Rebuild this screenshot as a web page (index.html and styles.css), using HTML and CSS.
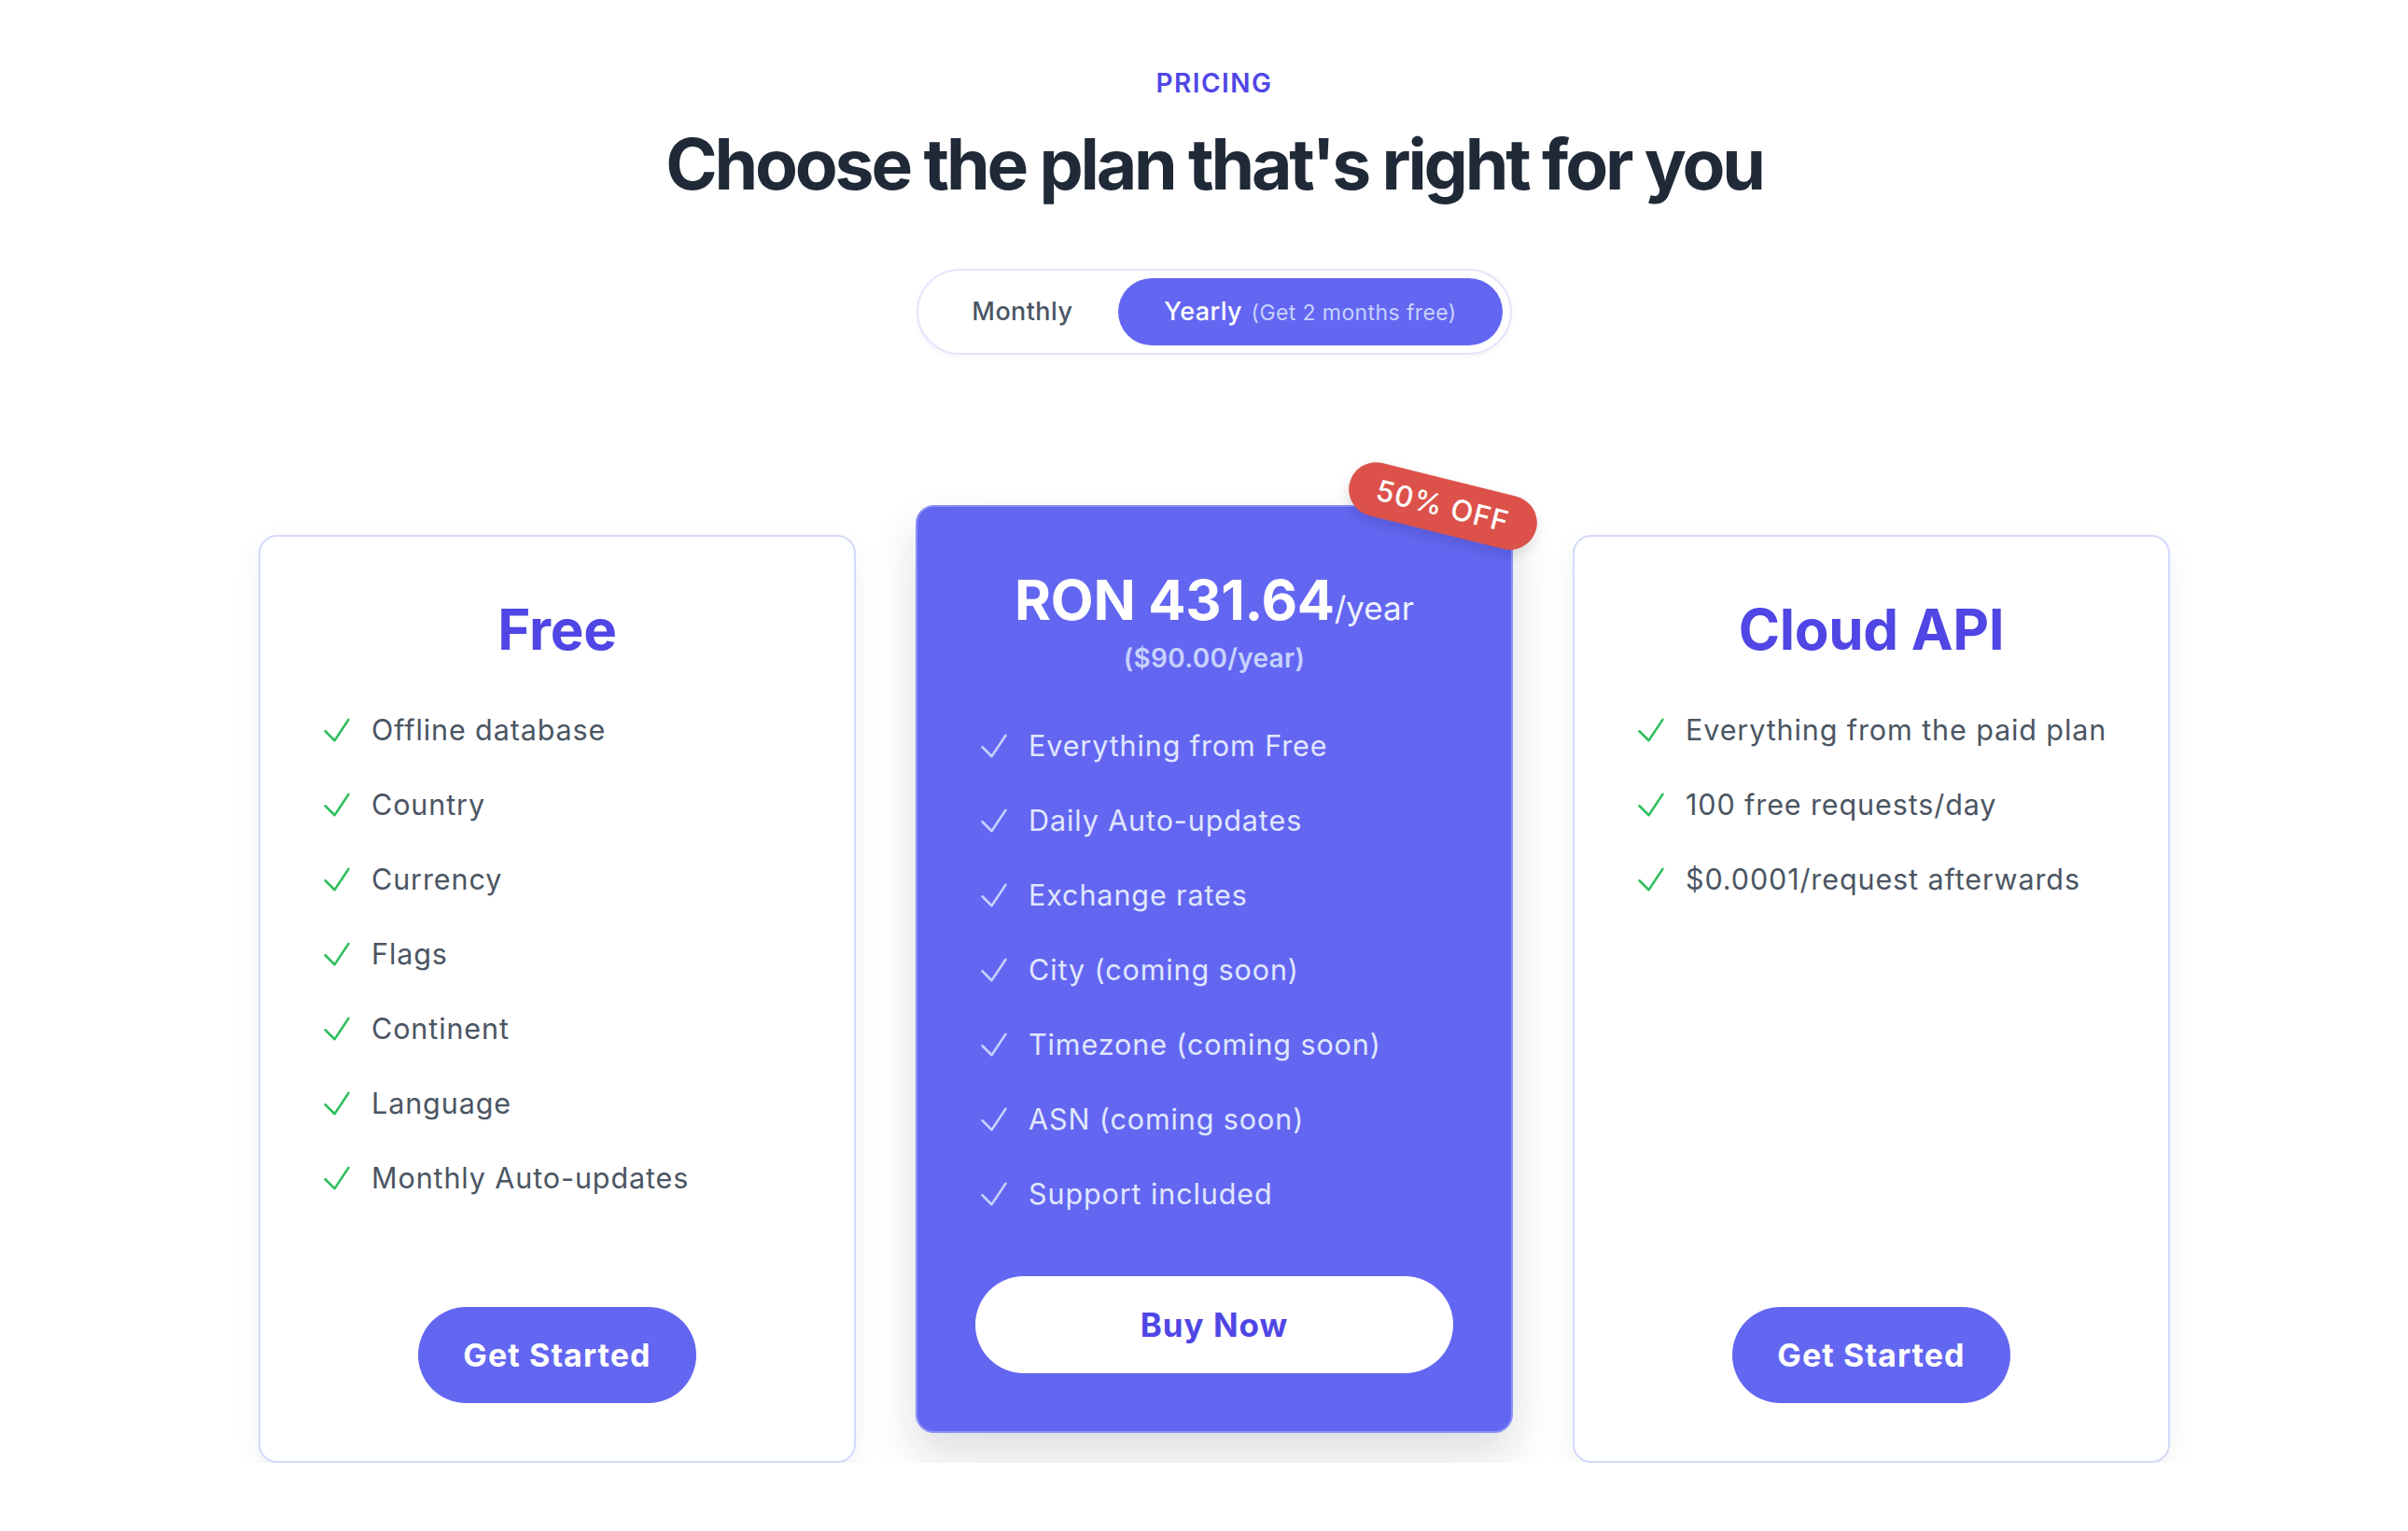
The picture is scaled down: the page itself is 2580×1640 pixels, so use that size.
FILE: index.html
```html
<!DOCTYPE html>
<html lang="en">
<head>
<meta charset="utf-8">
<title>Pricing</title>
<link rel="stylesheet" href="styles.css">
</head>
<body>
<main class="page">
  <header class="intro">
    <p class="eyebrow">Pricing</p>
    <h1 class="title">Choose the plan that's right for you</h1>
    <div class="toggle">
      <button class="toggle-btn" type="button">Monthly</button>
      <button class="toggle-btn is-active" type="button">Yearly <span class="toggle-note">(Get 2 months free)</span></button>
    </div>
  </header>

  <section class="plans">
    <article class="plan">
      <h2 class="plan-name">Free</h2>
      <ul class="features">
        <li class="feature"><svg class="check" viewBox="0 0 24 24" fill="none" stroke="currentColor" stroke-width="1.5" stroke-linecap="round" stroke-linejoin="round"><path d="M4.5 12.75l6 6 9-13.5"/></svg><span>Offline database</span></li>
        <li class="feature"><svg class="check" viewBox="0 0 24 24" fill="none" stroke="currentColor" stroke-width="1.5" stroke-linecap="round" stroke-linejoin="round"><path d="M4.5 12.75l6 6 9-13.5"/></svg><span>Country</span></li>
        <li class="feature"><svg class="check" viewBox="0 0 24 24" fill="none" stroke="currentColor" stroke-width="1.5" stroke-linecap="round" stroke-linejoin="round"><path d="M4.5 12.75l6 6 9-13.5"/></svg><span>Currency</span></li>
        <li class="feature"><svg class="check" viewBox="0 0 24 24" fill="none" stroke="currentColor" stroke-width="1.5" stroke-linecap="round" stroke-linejoin="round"><path d="M4.5 12.75l6 6 9-13.5"/></svg><span>Flags</span></li>
        <li class="feature"><svg class="check" viewBox="0 0 24 24" fill="none" stroke="currentColor" stroke-width="1.5" stroke-linecap="round" stroke-linejoin="round"><path d="M4.5 12.75l6 6 9-13.5"/></svg><span>Continent</span></li>
        <li class="feature"><svg class="check" viewBox="0 0 24 24" fill="none" stroke="currentColor" stroke-width="1.5" stroke-linecap="round" stroke-linejoin="round"><path d="M4.5 12.75l6 6 9-13.5"/></svg><span>Language</span></li>
        <li class="feature"><svg class="check" viewBox="0 0 24 24" fill="none" stroke="currentColor" stroke-width="1.5" stroke-linecap="round" stroke-linejoin="round"><path d="M4.5 12.75l6 6 9-13.5"/></svg><span>Monthly Auto-updates</span></li>
      </ul>
      <div class="plan-footer"><a class="btn btn-primary" href="#">Get Started</a></div>
    </article>

    <article class="plan plan-featured">
      <span class="badge">50% OFF</span>
      <p class="price"><span class="price-amount">RON 431.64</span><span class="price-period">/year</span></p>
      <p class="price-usd">($90.00/year)</p>
      <ul class="features features-light">
        <li class="feature"><svg class="check" viewBox="0 0 24 24" fill="none" stroke="currentColor" stroke-width="1.5" stroke-linecap="round" stroke-linejoin="round"><path d="M4.5 12.75l6 6 9-13.5"/></svg><span>Everything from Free</span></li>
        <li class="feature"><svg class="check" viewBox="0 0 24 24" fill="none" stroke="currentColor" stroke-width="1.5" stroke-linecap="round" stroke-linejoin="round"><path d="M4.5 12.75l6 6 9-13.5"/></svg><span>Daily Auto-updates</span></li>
        <li class="feature"><svg class="check" viewBox="0 0 24 24" fill="none" stroke="currentColor" stroke-width="1.5" stroke-linecap="round" stroke-linejoin="round"><path d="M4.5 12.75l6 6 9-13.5"/></svg><span>Exchange rates</span></li>
        <li class="feature"><svg class="check" viewBox="0 0 24 24" fill="none" stroke="currentColor" stroke-width="1.5" stroke-linecap="round" stroke-linejoin="round"><path d="M4.5 12.75l6 6 9-13.5"/></svg><span>City (coming soon)</span></li>
        <li class="feature"><svg class="check" viewBox="0 0 24 24" fill="none" stroke="currentColor" stroke-width="1.5" stroke-linecap="round" stroke-linejoin="round"><path d="M4.5 12.75l6 6 9-13.5"/></svg><span>Timezone (coming soon)</span></li>
        <li class="feature"><svg class="check" viewBox="0 0 24 24" fill="none" stroke="currentColor" stroke-width="1.5" stroke-linecap="round" stroke-linejoin="round"><path d="M4.5 12.75l6 6 9-13.5"/></svg><span>ASN (coming soon)</span></li>
        <li class="feature"><svg class="check" viewBox="0 0 24 24" fill="none" stroke="currentColor" stroke-width="1.5" stroke-linecap="round" stroke-linejoin="round"><path d="M4.5 12.75l6 6 9-13.5"/></svg><span>Support included</span></li>
      </ul>
      <div class="plan-footer"><a class="btn btn-white" href="#">Buy Now</a></div>
    </article>

    <article class="plan">
      <h2 class="plan-name">Cloud API</h2>
      <ul class="features">
        <li class="feature"><svg class="check" viewBox="0 0 24 24" fill="none" stroke="currentColor" stroke-width="1.5" stroke-linecap="round" stroke-linejoin="round"><path d="M4.5 12.75l6 6 9-13.5"/></svg><span>Everything from the paid plan</span></li>
        <li class="feature"><svg class="check" viewBox="0 0 24 24" fill="none" stroke="currentColor" stroke-width="1.5" stroke-linecap="round" stroke-linejoin="round"><path d="M4.5 12.75l6 6 9-13.5"/></svg><span>100 free requests/day</span></li>
        <li class="feature"><svg class="check" viewBox="0 0 24 24" fill="none" stroke="currentColor" stroke-width="1.5" stroke-linecap="round" stroke-linejoin="round"><path d="M4.5 12.75l6 6 9-13.5"/></svg><span>$0.0001/request afterwards</span></li>
      </ul>
      <div class="plan-footer"><a class="btn btn-primary" href="#">Get Started</a></div>
    </article>
  </section>
</main>
</body>
</html>
```

FILE: styles.css
```css
* { box-sizing: border-box; }

html, body {
  margin: 0;
  background: #ffffff;
}

body {
  padding-left: 22px;
  font-family: Inter, "Noto Sans", "Liberation Sans", sans-serif;
  color: #1f2937;
}

.page {
  display: flex;
  flex-direction: column;
  align-items: center;
  padding-top: 68px;
}

.intro {
  display: flex;
  flex-direction: column;
  align-items: center;
}

.eyebrow {
  margin: 0;
  font-size: 28px;
  line-height: 42px;
  font-weight: 600;
  letter-spacing: 1.5px;
  text-transform: uppercase;
  color: #4f46e5;
}

.title {
  margin: 28px 0 0;
  font-size: 75px;
  line-height: 76px;
  font-weight: 700;
  letter-spacing: -3.2px;
  color: #1f2937;
}

.toggle {
  margin-top: 74px;
  display: flex;
  padding: 8px;
  border: 2px solid #e3e7fb;
  border-radius: 999px;
  background: #ffffff;
  box-shadow: 0 2px 6px rgba(17, 24, 39, 0.04);
}

.toggle-btn {
  font-family: inherit;
  border: 0;
  background: transparent;
  height: 72px;
  line-height: 72px;
  padding: 0 49px;
  border-radius: 999px;
  font-size: 27px;
  font-weight: 500;
  letter-spacing: 0.4px;
  color: #4b5563;
  white-space: nowrap;
  cursor: pointer;
}

.toggle-btn.is-active {
  background: #6366f1;
  color: #ffffff;
}

.toggle-note {
  margin-left: 2px;
  font-size: 23px;
  font-weight: 400;
  letter-spacing: 0.4px;
  color: #c7d2fe;
}

.plans {
  margin-top: 193px;
  display: grid;
  grid-template-columns: repeat(3, 640px);
  column-gap: 64px;
  align-items: stretch;
}

.plan {
  position: relative;
  display: flex;
  flex-direction: column;
  padding: 66px 62px 62px;
  border: 2px solid #d3daf9;
  border-radius: 20px;
  background: #ffffff;
  box-shadow: 0 10px 30px rgba(17, 24, 39, 0.06);
}

.plan-featured {
  background: #6366f1;
  border-color: #8c91f3;
  transform: translateY(-32px);
  box-shadow: 0 24px 48px rgba(17, 24, 39, 0.14);
}

.plan-name {
  margin: 0;
  text-align: center;
  font-size: 60px;
  line-height: 66px;
  font-weight: 700;
  letter-spacing: -0.3px;
  color: #4f46e5;
}

.features {
  list-style: none;
  margin: 52px 0 0;
  padding: 0;
  display: flex;
  flex-direction: column;
  gap: 34px;
}

.feature {
  display: flex;
  align-items: center;
  gap: 17px;
  font-size: 30.5px;
  line-height: 46px;
  letter-spacing: 0.9px;
  color: #4b5563;
}

.check {
  width: 40px;
  height: 40px;
  flex: none;
  color: #2fbf5c;
}

.plan-featured .features {
  margin-top: 51px;
}

.features-light .feature {
  color: #e0e7ff;
}

.features-light .check {
  color: #c7d2fe;
}

.price {
  margin: 0;
  text-align: center;
  line-height: 66px;
  color: #ffffff;
}

.price-amount {
  font-size: 59.5px;
  font-weight: 700;
  letter-spacing: -0.3px;
}

.price-period {
  font-size: 35px;
  font-weight: 400;
  color: #eef2ff;
}

.price-usd {
  margin: -6px 0 0;
  text-align: center;
  font-size: 28px;
  line-height: 40px;
  font-weight: 600;
  letter-spacing: 0.3px;
  color: #c7d2fe;
}

.plan-footer {
  margin-top: auto;
  padding-top: 65px;
  display: flex;
  justify-content: center;
}

.btn {
  display: inline-flex;
  align-items: center;
  justify-content: center;
  border-radius: 999px;
  font-weight: 700;
  text-decoration: none;
}

.btn-primary {
  height: 103px;
  padding: 0 48px;
  background: #6366f1;
  color: #ffffff;
  font-size: 34px;
  letter-spacing: 1.1px;
}

.btn-white {
  width: 100%;
  height: 104px;
  background: #ffffff;
  color: #4f46e5;
  font-size: 35px;
  letter-spacing: 1px;
}

.badge {
  position: absolute;
  top: -30px;
  right: -30px;
  height: 58px;
  padding: 0 30px;
  line-height: 58px;
  border-radius: 999px;
  background: #dc524a;
  color: #ffffff;
  font-size: 31px;
  font-weight: 500;
  letter-spacing: 1px;
  white-space: nowrap;
  transform: rotate(14deg);
  box-shadow: 0 6px 14px rgba(0, 0, 0, 0.12);
}
```
